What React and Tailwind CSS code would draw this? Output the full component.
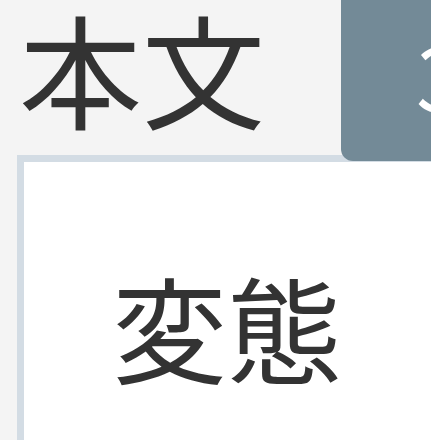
export default function App() {
  const font = { fontFamily: '"Noto Sans CJK JP", "Noto Sans", sans-serif' };
  return (
    <div className="w-[431px] h-[440px] overflow-hidden bg-[#f4f4f4]" style={font}>
      <div className="flex items-start w-[560px]">
        <div className="pl-[19px] text-[123px] leading-[132px] text-[#333333]">本文</div>
        <div className="ml-[76px] h-[161px] w-[200px] rounded-bl-[12px] bg-[#738a97] pl-[75px] text-[90px] leading-[146px] text-white">
          3
        </div>
      </div>
      <div className="-mt-[6px] ml-[17px] w-[500px] h-[400px] border-[7px] border-[#d3dce4] bg-white pl-[88px] pt-[93px] text-[115px] leading-[140px] text-[#333333]">
        変態
      </div>
    </div>
  );
}
